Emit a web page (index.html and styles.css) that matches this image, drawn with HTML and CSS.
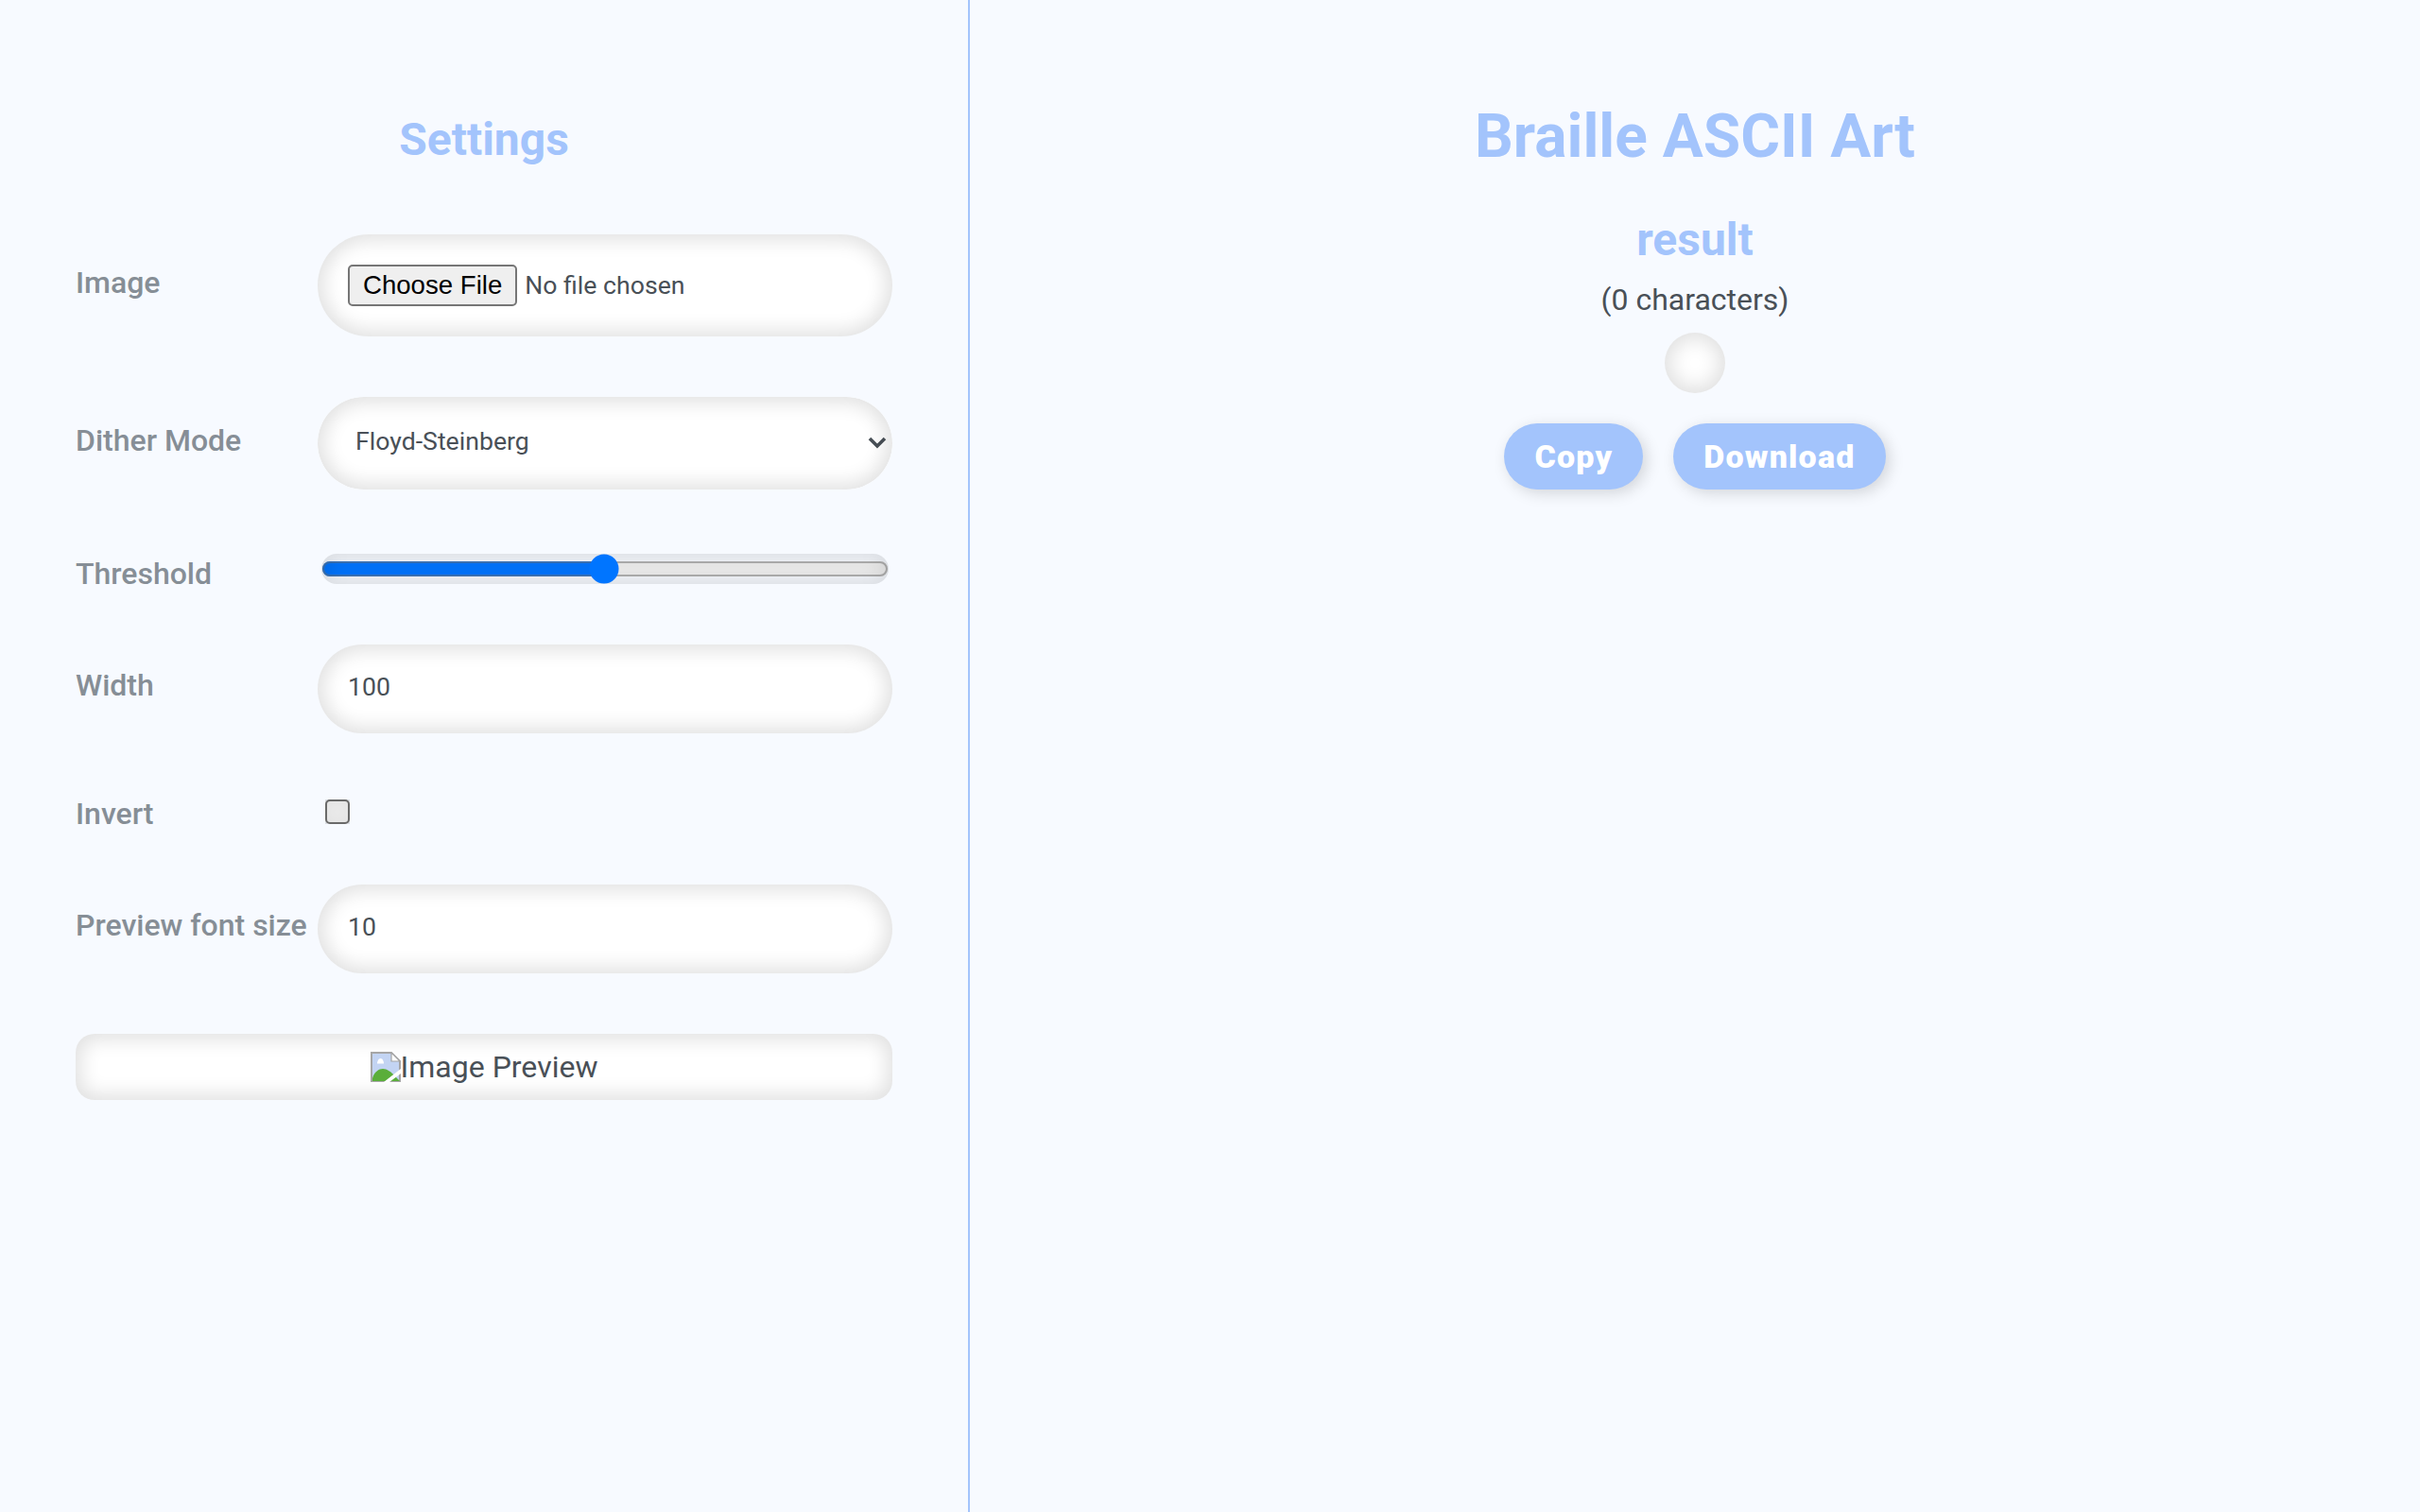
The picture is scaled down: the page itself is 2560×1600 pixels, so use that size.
FILE: index.html
```html
<!DOCTYPE html>
<html lang="en">
<head>
<meta charset="utf-8">
<title>Braille ASCII Art</title>
<link rel="stylesheet" href="styles.css">
</head>
<body>
<main class="layout">
  <section class="settings">
    <h2 class="settings-title">Settings</h2>
    <form class="form">
      <label class="label label-image" for="image">Image</label>
      <input class="control" id="image" type="file">
      <label class="label label-dither" for="dither">Dither Mode</label>
      <select class="control" id="dither">
        <option>Floyd-Steinberg</option>
        <option>Threshold</option>
      </select>
      <label class="label label-threshold" for="threshold">Threshold</label>
      <input class="range" id="threshold" type="range" min="0" max="255" value="127">
      <label class="label label-width" for="width">Width</label>
      <input class="control number" id="width" type="number" value="100">
      <label class="label label-invert" for="invert">Invert</label>
      <div class="check-cell"><input class="check" id="invert" type="checkbox"></div>
      <label class="label label-font" for="fontsize">Preview font size</label>
      <input class="control number" id="fontsize" type="number" value="10">
    </form>
    <div class="preview">
      <svg class="broken" viewBox="0 0 16 16" width="16" height="16" aria-hidden="true">
        <path d="M.5.5H11L15.500 5v10.500H.5z" fill="#c3d4f3" stroke="#a6a6a6"/>
        <path d="M11 .5V5h4.500z" fill="#fff" stroke="#a6a6a6" stroke-width=".6"/>
        <path d="M1 15.500V14C2 10.500 4.500 9 6.500 9S11 10.500 13 13L15.500 15.500z" fill="#5aae3a"/>
        <path d="M3.500 6.200C3.500 5 4.300 3.500 5.300 3.500S7 5 7 6.200z" fill="#fff"/>
        <path d="M7 16 16 9v2.500L10 16z" fill="#fff"/>
      </svg><span>Image Preview</span>
    </div>
  </section>
  <section class="output">
    <h1 class="app-title">Braille ASCII Art</h1>
    <h2 class="result-title">result</h2>
    <p class="count">(0 characters)</p>
    <div class="art"></div>
    <div class="actions">
      <button class="btn" type="button">Copy</button>
      <button class="btn" type="button">Download</button>
    </div>
  </section>
</main>
</body>
</html>
```

FILE: styles.css
```css
html { zoom: 2; }
* { box-sizing: border-box; }
body {
  margin: 0;
  min-height: 800px;
  background: #f7faff;
  color: #495057;
  font-family: Roboto, sans-serif;
  font-size: 16px;
}
.layout {
  display: grid;
  grid-template-columns: 513px 1fr;
  min-height: 800px;
}
.settings {
  padding: 0 40px;
  border-right: 1px solid #a3c4fc;
}
.settings-title {
  margin: 60px 0 36px;
  color: #a3c4fc;
  font-size: 24px;
  line-height: 28px;
  text-align: center;
  font-weight: 700;
}
.form {
  display: grid;
  grid-template-columns: 128px 304px;
  row-gap: 32px;
  align-items: start;
}
.label {
  margin-bottom: -10px;
  color: #868e96;
  font-weight: 500;
  font-size: 16px;
  line-height: 19px;
  white-space: nowrap;
}
.label-image { margin-top: 16px; }
.label-dither { margin-top: 13.500px; }
.label-threshold { margin-top: 3px; }
.label-width { margin-top: 12px; }
.label-invert { margin-top: 1px; }
.label-font { margin-top: 12px; }
.control {
  display: block;
  width: 304px;
  padding: 16px;
  border: 0;
  border-radius: 50px;
  background: #fff;
  box-shadow: inset 0 0 10px 3px rgba(0, 0, 0, .12);
  color: #495057;
  font-family: Roboto, sans-serif;
  font-size: 13.333px;
  outline: 0;
}
.number { padding: 14.500px 16px 16.500px; }
.control::file-selector-button {
  font-family: "Liberation Sans", sans-serif;
  font-size: 13.8px;
}
select.control {
  appearance: none;
  background-image: url("data:image/svg+xml,%3Csvg xmlns='http://www.w3.org/2000/svg' viewBox='0 0 10 7'%3E%3Cpath d='M1 1l4 4 4-4' fill='none' stroke='%23495057' stroke-width='1.800'/%3E%3C/svg%3E");
  background-repeat: no-repeat;
  background-position: right 3.250px center;
  background-size: 10px 7px;
}
#dither { padding: 15.500px 16px 17.700px 20px; }
.range {
  display: block;
  width: 300px;
  margin: 2px 2px 0;
  border-radius: 50px;
  box-shadow: inset 0 0 10px 3px rgba(0, 0, 0, .12);
}
.check-cell { height: 16px; }
.check {
  display: block;
  margin: 3px 0 0 4px;
  box-shadow: inset 0 0 10px 3px rgba(0, 0, 0, .12);
}
.preview {
  display: flex;
  justify-content: center;
  align-items: center;
  height: 35px;
  margin-top: 32px;
  border-radius: 10px;
  background: #fff;
  box-shadow: inset 0 0 10px 3px rgba(0, 0, 0, .12);
  font-size: 16px;
}
.broken { display: block; flex: none; }
.output { text-align: center; padding-top: 54px; }
.app-title {
  margin: 0;
  color: #a3c4fc;
  font-size: 32px;
  line-height: 37px;
  font-weight: 700;
}
.result-title {
  margin: 22px 0 0;
  color: #a3c4fc;
  font-size: 24px;
  line-height: 28px;
  font-weight: 700;
}
.count { margin: 8px 0 0; line-height: 19px; }
.art {
  width: 32px;
  height: 32px;
  margin: 8px auto 0;
  border-radius: 50%;
  background: #fff;
  box-shadow: inset 0 0 10px 3px rgba(0, 0, 0, .12);
}
.actions {
  display: flex;
  justify-content: center;
  gap: 16px;
  margin-top: 16px;
}
.btn {
  height: 35px;
  padding: 0 16px;
  border: 0;
  border-radius: 50px;
  background: #a3c4fc;
  box-shadow: 2px 2px 8px rgba(0, 0, 0, .15);
  color: #fff;
  font-family: Roboto, sans-serif;
  font-size: 17px;
  font-weight: 900;
  letter-spacing: .6px;
}
```
